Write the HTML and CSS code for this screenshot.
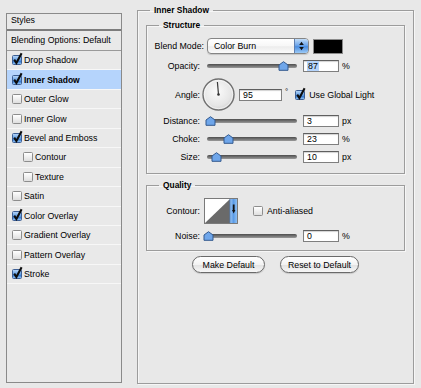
FILE: index.html
```html
<!DOCTYPE html>
<html>
<head>
<meta charset="utf-8">
<title>Layer Style</title>
<link rel="stylesheet" href="styles.css">
</head>
<body>
<div class="dialog">
  <div class="styles-panel">
    <div class="panel-head">Styles</div>
    <div class="panel-blend">Blending Options: Default</div>
    <ul class="effects">
      <li class="effect"><span class="cb checked"><svg viewBox="0 0 10 10"><path d="M2.2 4.6 L4.4 8 L9.6 -1.8"/></svg></span>Drop Shadow</li>
      <li class="effect selected"><span class="cb checked"><svg viewBox="0 0 10 10"><path d="M2.2 4.6 L4.4 8 L9.6 -1.8"/></svg></span>Inner Shadow</li>
      <li class="effect"><span class="cb"></span>Outer Glow</li>
      <li class="effect"><span class="cb"></span>Inner Glow</li>
      <li class="effect"><span class="cb checked"><svg viewBox="0 0 10 10"><path d="M2.2 4.6 L4.4 8 L9.6 -1.8"/></svg></span>Bevel and Emboss</li>
      <li class="effect sub"><span class="cb"></span>Contour</li>
      <li class="effect sub"><span class="cb"></span>Texture</li>
      <li class="effect"><span class="cb"></span>Satin</li>
      <li class="effect"><span class="cb checked"><svg viewBox="0 0 10 10"><path d="M2.2 4.6 L4.4 8 L9.6 -1.8"/></svg></span>Color Overlay</li>
      <li class="effect"><span class="cb"></span>Gradient Overlay</li>
      <li class="effect"><span class="cb"></span>Pattern Overlay</li>
      <li class="effect"><span class="cb checked"><svg viewBox="0 0 10 10"><path d="M2.2 4.6 L4.4 8 L9.6 -1.8"/></svg></span>Stroke</li>
    </ul>
  </div>

  <fieldset class="group outer">
    <legend>Inner Shadow</legend>

    <fieldset class="group structure">
      <legend>Structure</legend>

      <div class="row blend-row">
        <span class="lbl lbl-wide">Blend Mode:</span>
        <div class="popup">
          <span class="popup-text">Color Burn</span>
          <span class="popup-arrows"><svg viewBox="0 0 14 14"><path d="M7 2.5 L9.5 5.8 L4.5 5.8 Z"/><path d="M7 11.5 L9.5 8.2 L4.5 8.2 Z"/></svg></span>
        </div>
        <div class="color-swatch"></div>
      </div>

      <div class="row slider-row opacity-row">
        <span class="lbl">Opacity:</span>
        <div class="slider"><div class="track"></div><span class="thumb" style="left:75px"><svg viewBox="0 0 11 10"><path d="M1 4 L5.5 0.7 L10 4 L10 9.3 L1 9.3 Z"/></svg></span></div>
        <div class="field"><span class="sel">87</span></div>
        <span class="unit">%</span>
      </div>

      <div class="row angle-row">
        <span class="lbl">Angle:</span>
        <svg class="dial" viewBox="0 0 33 33">
          <defs>
            <radialGradient id="dg" cx="0.45" cy="0.4" r="0.65">
              <stop offset="0" stop-color="#fbfbfb"/>
              <stop offset="0.7" stop-color="#e6e6e6"/>
              <stop offset="1" stop-color="#cfcfcf"/>
            </radialGradient>
          </defs>
          <circle cx="16.5" cy="16.5" r="15.5" fill="url(#dg)" stroke="#707070" stroke-width="1.4"/>
          <circle cx="16.5" cy="16.5" r="14.2" fill="none" stroke="#ffffff" stroke-width="0.8" opacity="0.7"/>
          <line x1="16.5" y1="16.5" x2="15.4" y2="4" stroke="#3a3a3a" stroke-width="1.2"/>
          <circle cx="16.5" cy="16.5" r="1.3" fill="#333"/>
        </svg>
        <div class="field field-angle">95</div>
        <span class="deg">°</span>
        <span class="cb checked cb-global"><svg viewBox="0 0 10 10"><path d="M2.2 4.6 L4.4 8 L9.6 -1.8"/></svg></span>
        <span class="cb-label">Use Global Light</span>
      </div>

      <div class="row slider-row distance-row">
        <span class="lbl">Distance:</span>
        <div class="slider"><div class="track"></div><span class="thumb" style="left:2px"><svg viewBox="0 0 11 10"><path d="M1 4 L5.5 0.7 L10 4 L10 9.3 L1 9.3 Z"/></svg></span></div>
        <div class="field">3</div>
        <span class="unit">px</span>
      </div>

      <div class="row slider-row">
        <span class="lbl">Choke:</span>
        <div class="slider"><div class="track"></div><span class="thumb" style="left:20px"><svg viewBox="0 0 11 10"><path d="M1 4 L5.5 0.7 L10 4 L10 9.3 L1 9.3 Z"/></svg></span></div>
        <div class="field">23</div>
        <span class="unit">%</span>
      </div>

      <div class="row slider-row">
        <span class="lbl">Size:</span>
        <div class="slider"><div class="track"></div><span class="thumb" style="left:8px"><svg viewBox="0 0 11 10"><path d="M1 4 L5.5 0.7 L10 4 L10 9.3 L1 9.3 Z"/></svg></span></div>
        <div class="field">10</div>
        <span class="unit">px</span>
      </div>
    </fieldset>

    <fieldset class="group quality">
      <legend>Quality</legend>

      <div class="row contour-row">
        <span class="lbl">Contour:</span>
        <svg class="contour" viewBox="0 0 34 26">
          <defs>
            <linearGradient id="cg" x1="0" y1="0" x2="1" y2="0">
              <stop offset="0" stop-color="#9cc6f3"/>
              <stop offset="0.5" stop-color="#5b9be6"/>
              <stop offset="1" stop-color="#8ec0f4"/>
            </linearGradient>
          </defs>
          <rect x="0.5" y="0.5" width="33" height="25" fill="#ffffff" stroke="#7a7a7a"/>
          <polygon points="1,25 26,1 26,25" fill="#6a6a6a"/>
          <rect x="26" y="1" width="7" height="24" fill="url(#cg)"/>
          <line x1="26" y1="1" x2="26" y2="25" stroke="#4d7fc0" stroke-width="0.8"/>
          <path d="M28.8 6.5 L30.6 6.5 L30.6 12 L31.4 12 L29.7 15.5 L28 12 L28.8 12 Z" fill="#111"/>
        </svg>
        <span class="cb cb-anti"></span>
        <span class="cb-label">Anti-aliased</span>
      </div>

      <div class="row slider-row">
        <span class="lbl">Noise:</span>
        <div class="slider"><div class="track"></div><span class="thumb" style="left:0px"><svg viewBox="0 0 11 10"><path d="M1 4 L5.5 0.7 L10 4 L10 9.3 L1 9.3 Z"/></svg></span></div>
        <div class="field">0</div>
        <span class="unit">%</span>
      </div>
    </fieldset>

    <div class="buttons">
      <button class="btn btn-make">Make Default</button>
      <button class="btn btn-reset">Reset to Default</button>
    </div>
  </fieldset>
</div>
</body>
</html>
```

FILE: styles.css
```css
* { box-sizing: border-box; }

html, body {
  margin: 0;
  padding: 0;
}

body {
  width: 421px;
  height: 388px;
  overflow: hidden;
  background: #e8e8e8;
  font-family: "Liberation Sans", Arial, sans-serif;
  font-size: 8.8px;
  color: #000;
}

.dialog {
  display: flex;
  align-items: flex-start;
  padding-left: 6px;
}

/* ---------- left styles list ---------- */
.styles-panel {
  margin-top: 13px;
  width: 116px;
  height: 370px;
  border: 1px solid #8a8a8a;
  background: #e9e9e9;
}

.panel-head {
  height: 17px;
  padding: 1px 0 0 4px;
  line-height: 11px;
  border-bottom: 2px solid #7c7c7c;
}

.panel-blend {
  height: 20px;
  padding-left: 4px;
  line-height: 19px;
  border-bottom: 1px solid #9a9a9a;
}

.effects {
  list-style: none;
  margin: 0;
  padding: 0;
}

.effect {
  display: flex;
  align-items: center;
  height: 19.45px;
  padding-left: 5px;
  border-bottom: 1px solid #f7f7f7;
}

.effect.sub { padding-left: 16px; }

.effect.selected {
  background: #b5d4fc;
  font-weight: bold;
  font-size: 8.5px;
}

.cb {
  flex: none;
  position: relative;
  width: 10px;
  height: 10px;
  margin-right: 2px;
  border: 1px solid #8d8d8d;
  border-radius: 1.5px;
  background: linear-gradient(#ffffff, #ececec 60%, #dedede);
}

.cb.checked {
  border-color: #3d5f95;
  background: linear-gradient(#b3d4f8, #5d9be3 55%, #3b7fd4 70%, #8fc2f5);
}

.cb svg {
  position: absolute;
  left: -1px;
  top: -1px;
  width: 10px;
  height: 10px;
  overflow: visible;
}

.cb svg path {
  fill: none;
  stroke: #0d0d0d;
  stroke-width: 2.1;
  stroke-linecap: butt;
  stroke-linejoin: miter;
}

/* ---------- right fieldsets ---------- */
.group {
  margin: 0;
  min-width: 0;
  border: 1px solid #9c9c9c;
  box-shadow: 1px 1px 0 #f6f6f6, inset 1px 1px 0 #f6f6f6;
}

.group > legend {
  padding: 0 4px;
  line-height: 11px;
  font-weight: bold;
  font-size: 8.4px;
}

.outer {
  margin: 5px 0 0 15px;
  width: 277px;
  height: 379px;
  padding: 4px 8px 0 8px;
}

.outer > legend { margin-left: 4px; }

.structure,
.quality {
  width: 259px;
  padding: 7px 0 10px 0;
}

.structure > legend,
.quality > legend { margin-left: 12px; }

.quality {
  margin-top: 6px;
  padding-bottom: 8px;
}

.row {
  display: flex;
  align-items: center;
}

.lbl {
  flex: none;
  width: 53px;
  text-align: right;
}

.lbl-wide { width: 57px; }

/* blend mode */
.blend-row { height: 16px; }

.popup {
  display: flex;
  width: 102px;
  height: 16px;
  margin-left: 3px;
  border: 1px solid #858585;
  border-radius: 4px;
  overflow: hidden;
  background: linear-gradient(#ffffff, #f7f7f7 50%, #ececec 55%, #fbfbfb);
  box-shadow: 0 1px 1px rgba(0, 0, 0, 0.15);
}

.popup-text {
  flex: 1;
  padding-left: 6px;
  line-height: 14px;
}

.popup-arrows {
  flex: none;
  width: 14px;
  height: 14px;
  border-left: 1px solid #5e7fb0;
  background: linear-gradient(#c1dcf8, #6ea6ea 45%, #4a8de0 55%, #9ccaf6);
}

.popup-arrows svg {
  display: block;
  width: 13px;
  height: 14px;
}

.popup-arrows path { fill: #111; }

.color-swatch {
  width: 30px;
  height: 15px;
  margin-left: 4px;
  background: #000;
  border: 1px solid #8a8a8a;
}

/* sliders */
.slider-row { height: 12px; margin-top: 6px; }
.distance-row { margin-top: 4px; }

.slider {
  position: relative;
  flex: none;
  width: 96px;
  height: 12px;
  margin-left: 3px;
}

.track {
  margin: 4px 2px 0 4px;
  height: 4px;
  border-radius: 2px;
  background: linear-gradient(#4d4d4d, #7a7a7a 60%, #9a9a9a);
}

.thumb {
  position: absolute;
  top: 1px;
  width: 11px;
  height: 10px;
}

.thumb svg {
  display: block;
  width: 11px;
  height: 10px;
}

.thumb path {
  fill: #6fa6ea;
  stroke: #33598e;
  stroke-width: 1;
}

.field {
  flex: none;
  width: 36px;
  height: 12px;
  margin-left: 4px;
  padding-left: 3px;
  line-height: 10px;
  background: #fff;
  border: 1px solid #7f7f7f;
  border-top-color: #5f5f5f;
  box-shadow: inset 0 1px 1px rgba(0, 0, 0, 0.18);
}

.sel { background: #b5d4fc; padding: 0 1px; }

.unit { margin-left: 3px; }

/* angle */
.angle-row { height: 33px; margin-top: 6px; }

.dial {
  flex: none;
  width: 33px;
  height: 33px;
  margin-left: 2px;
}

.field-angle { width: 43px; }

.deg {
  align-self: flex-start;
  margin: 9px 0 0 3px;
  font-size: 8px;
}

.cb-global { margin-left: 7px; margin-right: 0; }

.cb-label { margin-left: 4px; }

/* quality */
.contour-row { height: 26px; }

.contour {
  flex: none;
  width: 34px;
  height: 26px;
  margin-left: 4px;
}

.cb-anti { margin-left: 15px; margin-right: 0; }

.quality .slider-row { margin-top: 6px; }

/* buttons */
.buttons {
  display: flex;
  justify-content: center;
  gap: 15px;
  margin-top: 5px;
}

.btn {
  height: 17px;
  padding: 0;
  font-family: inherit;
  font-size: 8.8px;
  color: #000;
  border: 1px solid #6a6a6a;
  border-radius: 9px;
  background: linear-gradient(#ffffff, #f3f3f3 50%, #e3e3e3 55%, #f7f7f7);
  box-shadow: 0 1px 1px rgba(0, 0, 0, 0.15);
}

.btn-make { width: 73px; }
.btn-reset { width: 79px; }
```
